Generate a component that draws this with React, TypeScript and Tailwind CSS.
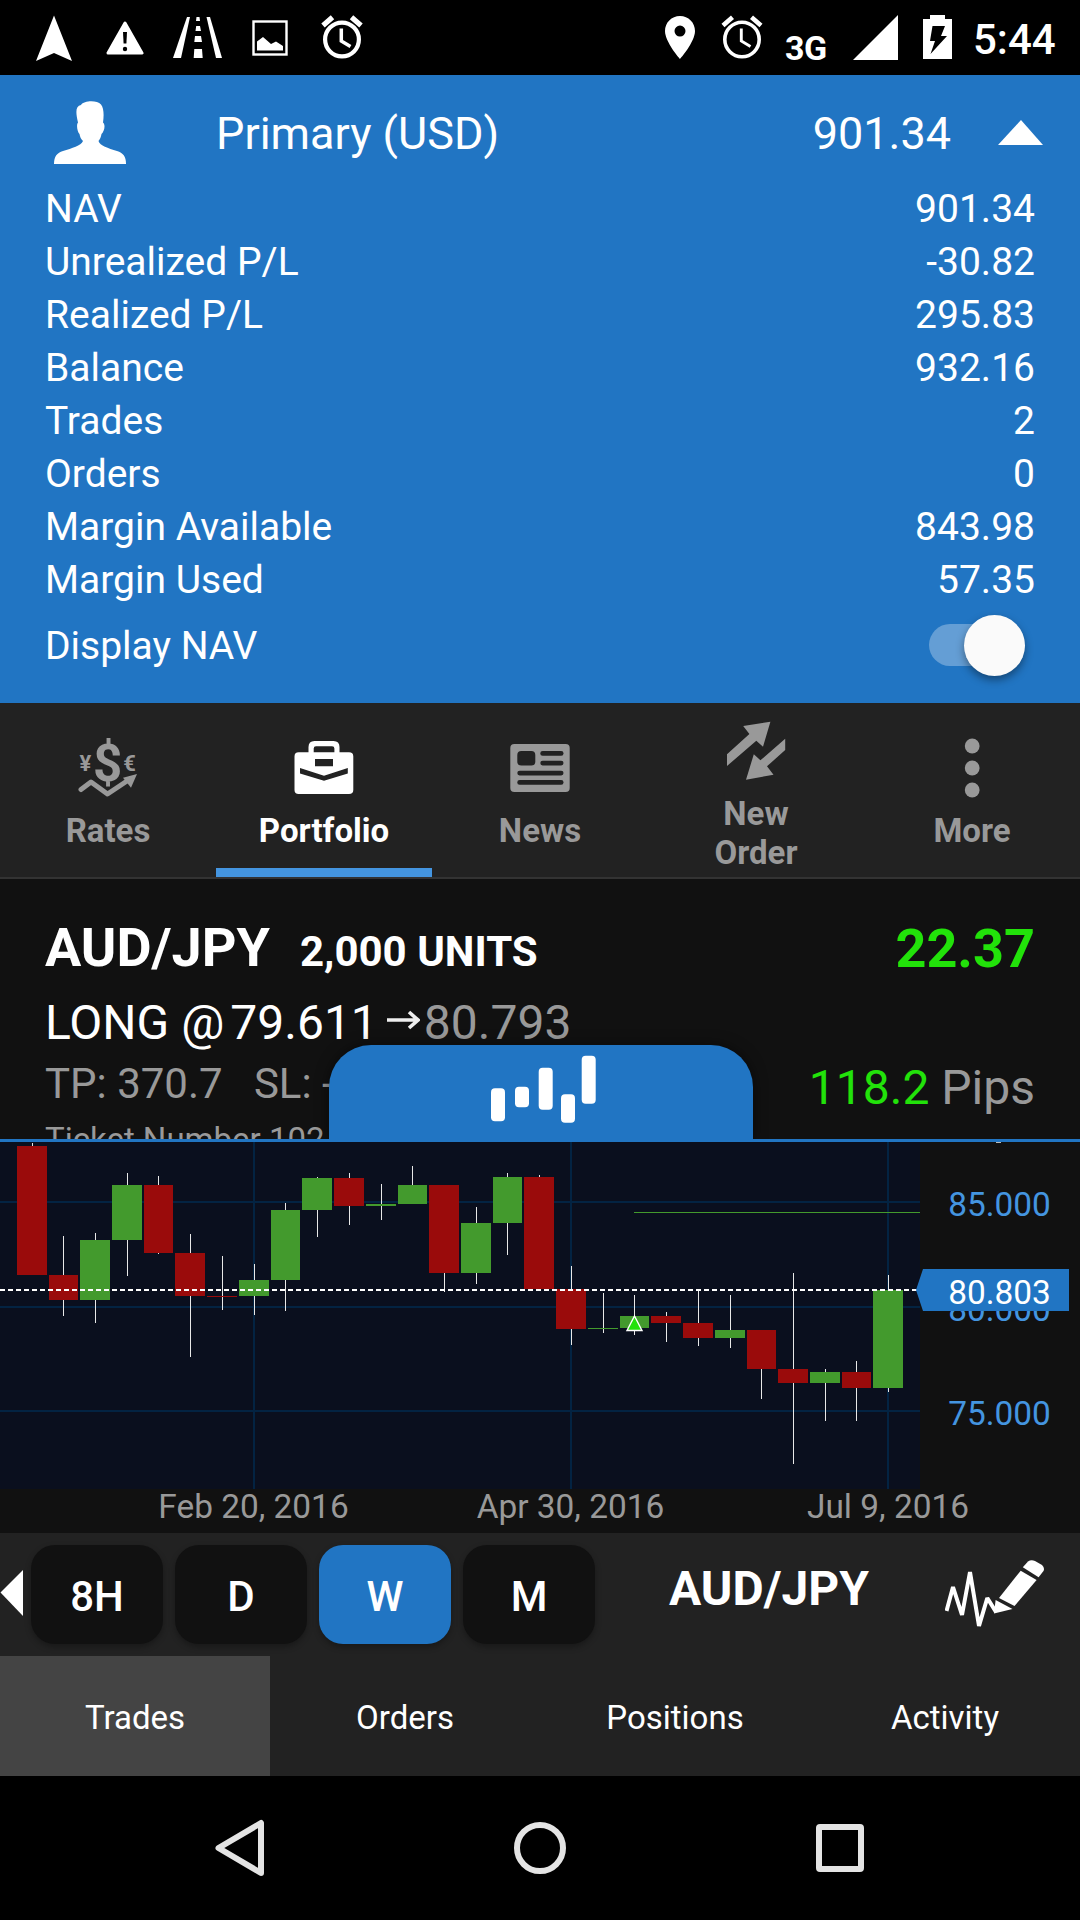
import type { ReactNode } from 'react';

const ACCOUNT_ROWS = [
  { label: 'NAV', value: '901.34' },
  { label: 'Unrealized P/L', value: '-30.82' },
  { label: 'Realized P/L', value: '295.83' },
  { label: 'Balance', value: '932.16' },
  { label: 'Trades', value: '2' },
  { label: 'Orders', value: '0' },
  { label: 'Margin Available', value: '843.98' },
  { label: 'Margin Used', value: '57.35' },
];

// x, width, high, body top, body bottom, low, direction
type Candle = [number, number, number, number, number, number, 'up' | 'down'];

const CANDLES: Candle[] = [
  [17, 30, 1, 4, 133, 133, 'down'],
  [49, 29, 94, 133, 158, 174, 'down'],
  [80, 30, 91, 98, 158, 181, 'up'],
  [112, 30, 31, 43, 98, 134, 'up'],
  [144, 29, 34, 43, 111, 112, 'down'],
  [175, 30, 92, 111, 154, 215, 'down'],
  [207, 30, 114, 154, 155, 168, 'down'],
  [239, 30, 122, 138, 154, 173, 'up'],
  [271, 29, 61, 68, 138, 169, 'up'],
  [302, 30, 35, 36, 68, 95, 'up'],
  [334, 30, 31, 36, 64, 83, 'down'],
  [366, 30, 42, 62, 64, 78, 'up'],
  [398, 29, 24, 43, 62, 62, 'up'],
  [429, 30, 43, 43, 131, 150, 'down'],
  [461, 30, 65, 81, 131, 142, 'up'],
  [493, 29, 31, 35, 81, 113, 'up'],
  [524, 30, 33, 35, 147, 147, 'down'],
  [556, 30, 124, 147, 187, 203, 'down'],
  [588, 30, 151, 186, 187, 191, 'up'],
  [620, 29, 153, 174, 186, 193, 'up'],
  [651, 30, 170, 174, 181, 200, 'down'],
  [683, 30, 148, 181, 196, 204, 'down'],
  [715, 30, 153, 188, 196, 206, 'up'],
  [747, 29, 188, 188, 227, 257, 'down'],
  [778, 30, 131, 227, 241, 322, 'down'],
  [810, 30, 227, 230, 241, 279, 'up'],
  [842, 29, 219, 230, 246, 279, 'down'],
  [873, 30, 133, 148, 246, 250, 'up'],
];

const PERIODS = ['8H', 'D', 'W', 'M'];
const BOTTOM_TABS = ['Trades', 'Orders', 'Positions', 'Activity'];

function AlarmIcon({ stroke, className }: { stroke: number; className: string }) {
  return (
    <svg width="42" height="46" viewBox="0 0 42 46" fill="none" stroke="white" className={className}>
      <circle cx="21" cy="25.5" r={19 - stroke / 2} strokeWidth={stroke} />
      <path d="M2 11.5 L11.5 3.2 M40 11.5 L30.5 3.2" strokeWidth={stroke + 1} />
      <path d="M20.3 14.5 V27 L29.5 32.5" strokeWidth={stroke - 0.7} />
    </svg>
  );
}

function StatusBar() {
  return (
    <div className="flex h-[75px] items-start bg-black text-white">
      <svg width="36" height="46" viewBox="0 0 36 46" fill="white" className="mt-[15px] ml-9">
        <path d="M18 0.5 L36 46 L18 38 L0 46 Z" />
      </svg>
      <svg width="38" height="34" viewBox="0 0 38 34" className="mt-[21px] ml-[34px]">
        <path d="M19 2 L36 32 H2 Z" fill="white" stroke="white" strokeWidth="3" strokeLinejoin="round" />
        <path d="M17 11 H21 L20.4 22.5 H17.6 Z" fill="black" />
        <circle cx="19" cy="28" r="2.2" fill="black" />
      </svg>
      <svg width="49" height="42" viewBox="0 0 49 42" fill="white" className="mt-[17px] ml-[29px]">
        <path d="M14 0 H17 L8 41 H0 Z" />
        <path d="M33.5 0 H37 L49 41 H43 Z" />
        <path d="M23.5 0 H26.5 L27 4 H23 Z M23.2 9 H27 L28 14 H22.5 Z M22 19 H28 L29 25 H21.3 Z M21.3 32 H29 L29.7 41 H20.7 Z" />
      </svg>
      <svg width="36" height="36" viewBox="0 0 36 36" className="mt-5 ml-[30px]">
        <rect x="1.5" y="1.5" width="33" height="33" fill="none" stroke="white" strokeWidth="2.4" />
        <path d="M5 30.5 V21.5 L11 17 L19 24 L24 21.5 L31 26 V30.5 Z" fill="white" />
      </svg>
      <AlarmIcon stroke={4.2} className="mt-[14px] ml-[33px]" />

      <svg width="30" height="43" viewBox="0 0 30 43" className="mt-4 ml-auto">
        <path
          d="M15 0 C6.5 0 0 6.7 0 15 C0 26 15 43 15 43 C15 43 30 26 30 15 C30 6.7 23.5 0 15 0 Z M15 9.6 A5.5 5.5 0 1 1 15 20.6 A5.5 5.5 0 1 1 15 9.6 Z"
          fill="white"
          fillRule="evenodd"
        />
      </svg>
      <AlarmIcon stroke={3.6} className="mt-[14px] ml-[26px]" />
      <span className="mt-[28px] ml-[22px] w-[44px] text-[34px] leading-[40px] font-bold tracking-[-0.5px]">3G</span>
      <svg width="45" height="45" viewBox="0 0 45 45" fill="white" className="mt-[15px] ml-[24px]">
        <path d="M45 0 V45 H0 Z" />
      </svg>
      <svg width="29" height="44" viewBox="0 0 29 44" className="mt-[15px] ml-[25px]">
        <path d="M7 0 H22 V4 H29 V44 H0 V4 H7 Z" fill="white" />
        <path d="M9.5 11 H22 L18 21 H24 L7.5 39 L12 26 H7 Z" fill="black" />
      </svg>
      <span className="mt-[15px] mr-[25px] ml-[21px] w-[82px] text-[42px] leading-[50px] font-medium">5:44</span>
    </div>
  );
}

function AccountPanel() {
  return (
    <section className="flex h-[628px] flex-col bg-[#2175c3] text-white">
      <div className="flex h-[108px] items-start">
        <svg width="72" height="63" viewBox="0 0 72 63" fill="white" className="mt-[26px] ml-[54px]">
          <path d="M0 63 C0 55 3 52 9 50 C18 47 27 45 29 40 C27 38 26 36 25.5 33 C23.5 31 22 24 24 21.5 C21.5 11 21.5 5 27 4 C30 -0.5 43 -1 47 3.5 C50 7 50 15 49 21.5 C52 24 50 31 47.5 33 C47 36 46 38 44.5 40 C46 45 54 47 63 50 C69 52 72 55 72 63 Z" />
        </svg>
        <span className="mt-[33px] ml-[90px] text-[45px] leading-[52px]">Primary (USD)</span>
        <span className="mt-[33px] ml-auto text-[45px] leading-[52px]">901.34</span>
        <svg width="45" height="25" viewBox="0 0 45 25" fill="white" className="mt-[45px] mr-[37px] ml-[47px]">
          <path d="M23 0 L45 25 H0 Z" />
        </svg>
      </div>
      {ACCOUNT_ROWS.map((row) => (
        <div key={row.label} className="flex h-[53px] items-center justify-between px-[45px] text-[39px] leading-[53px]">
          <span>{row.label}</span>
          <span>{row.value}</span>
        </div>
      ))}
      <div className="flex h-[76px] items-center justify-between pr-[55px] pl-[45px] text-[39px]">
        <span className="pt-[3px]">Display NAV</span>
        <div className="flex h-[42px] w-[96px] items-center justify-end rounded-full bg-white/30">
          <div className="h-[61px] w-[61px] rounded-full bg-[#fafafa] shadow-[0_4px_8px_rgba(0,0,0,0.4)]" />
        </div>
      </div>
    </section>
  );
}

function NavTab({ label, icon, active, twoLine }: { label: string; icon: ReactNode; active?: boolean; twoLine?: boolean }) {
  return (
    <div
      className={`relative flex flex-col items-center ${twoLine ? 'pt-[17px]' : 'pt-[35px]'} ${
        active ? 'text-white' : 'text-[#999]'
      }`}
    >
      <svg width="60" height="60" viewBox="0 0 60 60" fill="currentColor">
        {icon}
      </svg>
      <span
        className={`text-center text-[33px] leading-[39px] font-bold ${twoLine ? 'mt-[14px] w-[100px]' : 'mt-[13px]'}`}
      >
        {label}
      </span>
      {active && <div className="absolute inset-x-0 bottom-0 h-[9px] bg-[#4495e0]" />}
    </div>
  );
}

function MainTabs() {
  return (
    <nav className="grid h-[176px] grid-cols-5 border-b-2 border-[#333] bg-[#222]">
      <NavTab
        label="Rates"
        icon={
          <>
            <text x="29.7" y="43" fontSize="51" fontWeight="700" textAnchor="middle">$</text>
            <text x="7.5" y="33" fontSize="22" fontWeight="700" textAnchor="middle">¥</text>
            <text x="51.5" y="33" fontSize="22" fontWeight="700" textAnchor="middle">€</text>
            <path d="M3 51.5 L13 44 L29.5 56 L52 41" fill="none" stroke="currentColor" strokeWidth="5" strokeLinecap="round" strokeLinejoin="round" />
            <path d="M59 36 L45 39.7 L53 49.7 Z" />
          </>
        }
      />
      <NavTab
        label="Portfolio"
        active
        icon={
          <path
            fillRule="evenodd"
            d="M14.5 14.3 V9 Q14.5 3 20.5 3 H39.5 Q45.5 3 45.5 9 V14.3 H55 Q59.3 14.3 59.3 18.5 V52 Q59.3 56 55 56 H4.7 Q0.5 56 0.5 52 V18.5 Q0.5 14.3 4.7 14.3 Z M19.7 14.3 H40.4 V10.5 Q40.4 8.3 38 8.3 H22 Q19.7 8.3 19.7 10.5 Z M21 21 V28.3 H39 V21 Z M6 30 V35.5 L30 42.7 L53.8 35.5 V30 L30 37.7 Z"
          />
        }
      />
      <NavTab
        label="News"
        icon={
          <>
            <rect x="0.3" y="6" width="59.4" height="48" rx="4" />
            <g fill="#222">
              <rect x="7.3" y="13" width="18" height="14.5" rx="4" />
              <rect x="30.3" y="13" width="23.2" height="4.7" rx="2.3" />
              <rect x="30.3" y="22.7" width="23.2" height="4.7" rx="2.3" />
              <rect x="7.3" y="32.7" width="46.2" height="4.7" rx="2.3" />
              <rect x="7.3" y="42" width="46.2" height="4.7" rx="2.3" />
            </g>
          </>
        }
      />
      <NavTab
        label="New Order"
        twoLine
        icon={
          <>
            <path d="M44.4 1.7 L17.2 6 L23.4 14 L1 34.3 V46 L30.3 20.7 L37 26.7 Z" />
            <path d="M59.2 18.7 V30 L41 46.3 L47.5 54.7 L20 59.7 L27.8 34.3 L34.4 40.3 Z" />
          </>
        }
      />
      <NavTab
        label="More"
        icon={
          <>
            <circle cx="30.2" cy="8" r="7.4" />
            <circle cx="30.2" cy="30" r="7.4" />
            <circle cx="30.2" cy="52" r="7.4" />
          </>
        }
      />
    </nav>
  );
}

function TradeCard() {
  return (
    <section className="relative flex h-[263px] justify-between overflow-hidden border-b-[3px] border-[#2175c3] bg-[#111] px-[45px] text-[#999]">
      <div className="flex flex-col pt-[37px] whitespace-pre">
        <div className="flex items-baseline text-white">
          <span className="text-[54px] leading-[64px] font-bold">AUD/JPY</span>
          <span className="ml-[30px] text-[42px] leading-[50px] font-bold">2,000 UNITS</span>
        </div>
        <div className="mt-[15px] flex items-center text-[48px] leading-[56px]">
          <span className="text-white">LONG @</span>
          <span className="ml-[6px] text-white">79.611</span>
          <svg width="33" height="20" viewBox="0 0 33 20" fill="none" stroke="#eee" strokeWidth="3.6" className="mr-[4px] ml-[9px] mb-[6px]">
            <path d="M0 10 H31 M22 2 L31 10 L22 18" />
          </svg>
          <span>80.793</span>
        </div>
        <div className="mt-2 text-[42px] leading-[50px]">TP: 370.7   SL: -</div>
        <div className="mt-[11px] text-[33px] leading-[39px]">Ticket Number 102</div>
      </div>
      <div className="flex flex-col items-end pt-[38px]">
        <span className="text-[54px] leading-[64px] font-bold text-[#22e20a]">22.37</span>
        <span className="mt-[79px] text-[48px] leading-[56px]">
          <span className="text-[#22e20a]">118.2</span> Pips
        </span>
      </div>

      <div className="absolute top-[166px] left-[329px] h-[97px] w-[424px] rounded-t-[42px] bg-[#2175c3] shadow-[0_0_14px_rgba(0,0,0,0.5)]">
        <svg width="424" height="94" viewBox="0 0 424 94" fill="white">
          <rect x="162" y="43.3" width="14" height="33" rx="4" />
          <rect x="186" y="41.7" width="14" height="20.5" rx="4" />
          <rect x="209.7" y="22.7" width="14" height="42" rx="4" />
          <rect x="232" y="49.3" width="14" height="28.5" rx="4" />
          <rect x="252.7" y="10.7" width="14" height="48" rx="4" />
        </svg>
      </div>
    </section>
  );
}

function PriceChart() {
  return (
    <svg width="1080" height="391" viewBox="0 0 1080 391" className="block bg-[#111]" fontSize="33.4">
      <rect width="920" height="347" fill="#0a0f1e" />
      <g fill="#032342">
        {[59, 164, 268].map((y) => (
          <rect key={y} y={y} width="920" height="2" />
        ))}
        {[253, 570, 887].map((x) => (
          <rect key={x} x={x} width="2" height="347" />
        ))}
      </g>
      <rect x="634" y="70" width="286" height="1" fill="#439a2d" />
      {CANDLES.map(([x, w, high, top, bottom, low, dir]) => (
        <g key={x}>
          <rect x={x + Math.floor(w / 2)} y={high} width="1" height={low - high} fill="#e8e8e8" />
          <rect x={x} y={top} width={w} height={bottom - top} fill={dir === 'up' ? '#439a2d' : '#9a0b0b'} />
        </g>
      ))}
      <path d="M634.5 174 L642 188.5 H627 Z" fill="#22e20a" stroke="white" strokeWidth="1.4" />
      <path d="M0 148 H918" stroke="white" strokeWidth="2" strokeDasharray="5 3" />

      <g fill="#4495e0" textAnchor="middle">
        <text x="999.5" y="74">85.000</text>
        <text x="999.5" y="179">80.000</text>
        <text x="999.5" y="283">75.000</text>
      </g>
      <rect x="996" width="5" height="1" fill="#bbb" />
      <path d="M916 148 L923 127 H1069 V169 H923 Z" fill="#2175c3" />
      <text x="999.5" y="162" fill="white" textAnchor="middle">80.803</text>

      <g fill="#999" textAnchor="middle">
        <text x="253.5" y="376">Feb 20, 2016</text>
        <text x="570.5" y="376">Apr 30, 2016</text>
        <text x="888" y="376">Jul 9, 2016</text>
      </g>
    </svg>
  );
}

function ChartToolbar() {
  return (
    <div className="flex h-[123px] items-start bg-[#222] text-white">
      <svg width="23" height="46" viewBox="0 0 23 46" fill="white" className="mt-[37px]">
        <path d="M23 0 V46 L0.5 22.5 Z" />
      </svg>
      <div className="mt-3 ml-2 flex gap-3">
        {PERIODS.map((period) => (
          <button
            key={period}
            className={`h-[99px] w-[132px] rounded-[24px] pt-1 text-[42px] font-medium shadow-[0_3px_6px_rgba(0,0,0,0.3)] ${
              period === 'W' ? 'bg-[#2175c3]' : 'bg-[#111]'
            }`}
          >
            {period}
          </button>
        ))}
      </div>
      <span className="mt-[28px] ml-[74px] text-[48px] leading-[56px] font-bold">AUD/JPY</span>
      <svg width="100" height="69" viewBox="0 0 100 69" fill="white" className="mt-[27px] mr-[35px] ml-auto">
        <path d="M1.5 51 L8 27 L17 55 L25 12 L34 66 L42.3 38 L51 52" fill="none" stroke="white" strokeWidth="4" strokeLinejoin="bevel" />
        <path d="M50.6 40 L49 53.5 L67.5 49 Z" />
        <path d="M75.7 10.7 L91.6 20 L69.5 46 L54 38 Z" />
        <path d="M77.8 7.3 L83 1.5 Q86 -0.5 90 1 L97 5 Q100 8 98.5 11 L93.6 17.3 Z" />
      </svg>
    </div>
  );
}

function SystemNav() {
  return (
    <div className="flex h-[144px] items-center bg-black">
      <svg width="50" height="58" viewBox="0 0 50 58" fill="none" stroke="#e4e4e4" strokeWidth="6" strokeLinejoin="round" className="ml-[215px]">
        <path d="M46 4 V54 L3.5 29 Z" />
      </svg>
      <div className="ml-[249px] h-[52px] w-[52px] rounded-full border-[6px] border-[#e4e4e4]" />
      <div className="ml-[250px] h-[48px] w-[48px] rounded-[4px] border-[6px] border-[#e4e4e4]" />
    </div>
  );
}

export default function App() {
  return (
    <div className="h-[1920px] w-[1080px] overflow-hidden bg-black font-[Roboto,sans-serif]">
      <StatusBar />
      <AccountPanel />
      <MainTabs />
      <TradeCard />
      <PriceChart />
      <ChartToolbar />
      <div className="grid h-[120px] grid-cols-4 bg-[#222] text-[33px] text-white">
        {BOTTOM_TABS.map((tab) => (
          <div key={tab} className={`flex items-center justify-center pt-[3px] ${tab === 'Trades' ? 'bg-[#444]' : ''}`}>
            {tab}
          </div>
        ))}
      </div>
      <SystemNav />
    </div>
  );
}
